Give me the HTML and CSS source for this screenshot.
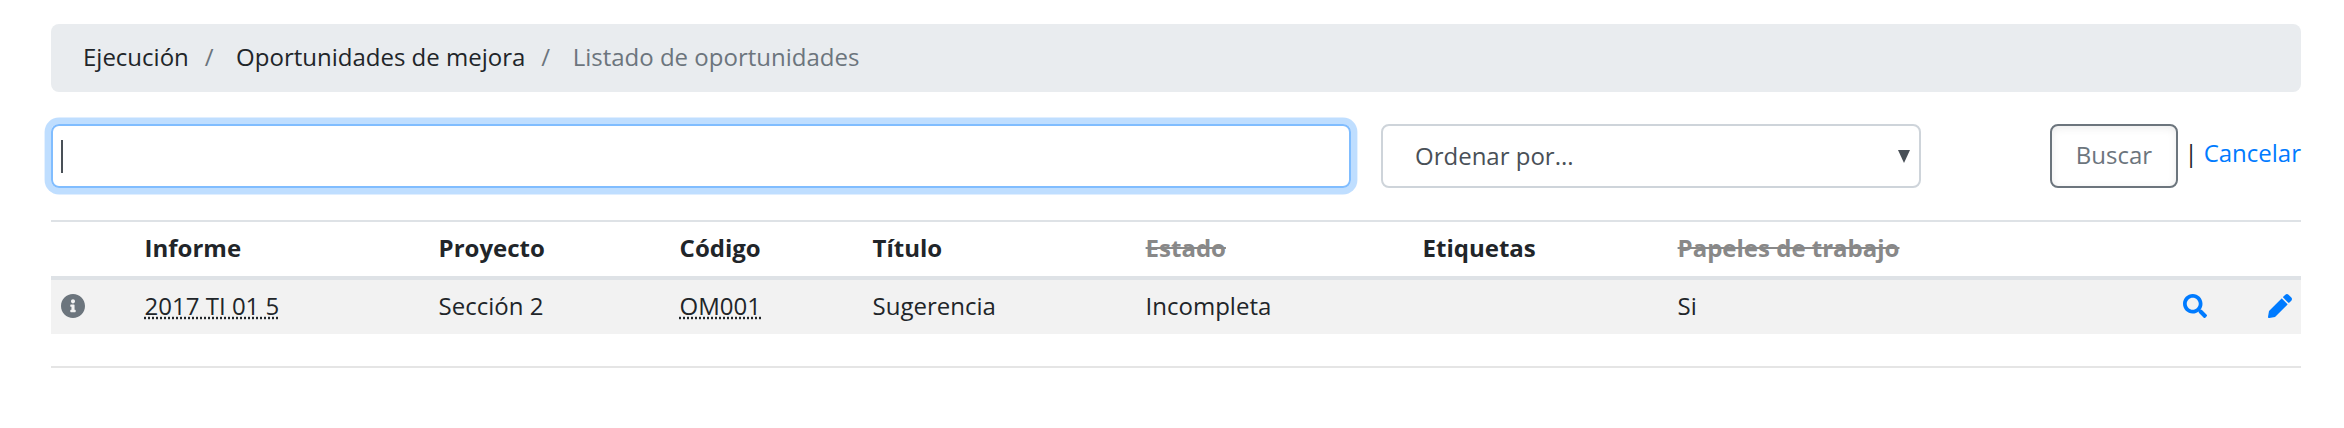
FILE: index.html
```
<!DOCTYPE html>
<html lang="es">
<head>
<meta charset="utf-8">
<title>Listado de oportunidades</title>
<link rel="stylesheet" href="styles.css">
</head>
<body>
<nav class="breadcrumb">
  <a class="crumb">Ejecución</a><span class="sep">/</span><a class="crumb">Oportunidades de mejora</a><span class="sep">/</span><span class="current">Listado de oportunidades</span>
</nav>
<form class="search">
  <div class="query"><span class="caret"></span></div>
  <div class="order"><span>Ordenar por...</span><svg class="arrow" viewBox="0 0 12 13"><path d="M0 0h12L6 13z"/></svg></div>
  <div class="actions"><button class="submit" type="button">Buscar</button><span class="bar">|</span><a class="cancel">Cancelar</a></div>
</form>
<table class="list">
  <colgroup><col class="c-info"><col class="c-report"><col class="c-project"><col class="c-code"><col class="c-title"><col class="c-state"><col class="c-tags"><col class="c-papers"><col class="c-view"><col class="c-edit"></colgroup>
  <thead>
    <tr><th></th><th>Informe</th><th>Proyecto</th><th>Código</th><th>Título</th><th><del>Estado</del></th><th>Etiquetas</th><th><del>Papeles de trabajo</del></th><th></th><th></th></tr>
  </thead>
  <tbody>
    <tr>
      <td><svg class="icon info" viewBox="8 8 496 496"><path d="M256 8C119.043 8 8 119.083 8 256c0 136.997 111.043 248 248 248s248-111.003 248-248C504 119.083 392.957 8 256 8zm0 110c23.196 0 42 18.804 42 42s-18.804 42-42 42-42-18.804-42-42 18.804-42 42-42zm56 254c0 6.627-5.373 12-12 12h-88c-6.627 0-12-5.373-12-12v-24c0-6.627 5.373-12 12-12h12v-64h-12c-6.627 0-12-5.373-12-12v-24c0-6.627 5.373-12 12-12h64c6.627 0 12 5.373 12 12v100h12c6.627 0 12 5.373 12 12v24z"/></svg></td>
      <td><abbr>2017 TI 01 5</abbr></td><td>Sección 2</td><td><abbr>OM001</abbr></td><td>Sugerencia</td><td>Incompleta</td><td></td><td>Si</td>
      <td><svg class="icon link" viewBox="0 0 512 512"><path d="M505 442.700L405.300 343c-4.500-4.500-10.600-7-17-7H372c27.600-35.300 44-79.700 44-128C416 93.100 322.900 0 208 0S0 93.100 0 208s93.100 208 208 208c48.300 0 92.700-16.400 128-44v16.300c0 6.400 2.500 12.500 7 17l99.700 99.700c9.400 9.400 24.600 9.400 33.900 0l28.300-28.300c9.400-9.400 9.400-24.600.1-34zM208 336c-70.700 0-128-57.200-128-128 0-70.700 57.200-128 128-128 70.700 0 128 57.200 128 128 0 70.700-57.200 128-128 128z"/></svg></td>
      <td><svg class="icon link" viewBox="0 0 512 512"><path d="M497.900 142.100l-46.100 46.100c-4.700 4.700-12.300 4.700-17 0l-111-111c-4.700-4.700-4.700-12.300 0-17l46.100-46.100c18.700-18.700 49.100-18.700 67.900 0l60.100 60.100c18.800 18.700 18.800 49.100 0 67.900zM284.200 99.800L21.600 362.400.4 483.900c-2.900 16.400 11.400 30.600 27.800 27.800l121.500-21.300 262.600-262.600c4.700-4.700 4.700-12.300 0-17l-111-111c-4.800-4.700-12.400-4.700-17.100 0z"/></svg></td>
    </tr>
  </tbody>
</table>
<hr class="rule">
</body>
</html>
```
FILE: styles.css
```
* { box-sizing: border-box; }
body {
  margin: 0;
  padding: 24px 43px 0 51px;
  background: #fff;
  color: #212529;
  font: 24px/36px "Open Sans", "Noto Sans", sans-serif;
}
.breadcrumb {
  display: flex;
  height: 68px;
  padding: 15px 32px;
  border-radius: 8px;
  background: #e9ecef;
}
.sep { padding: 0 22.500px 0 16px; color: #6c757d; }
.current { color: #6c757d; }
.search { display: flex; margin: 32px 0; height: 64px; }
.query {
  width: 1300px;
  margin-right: 30px;
  padding: 14px 8px;
  border: 2px solid #80bdff;
  border-radius: 8px;
  box-shadow: 0 0 0 6.400px rgba(0, 123, 255, .25);
}
.caret { display: block; width: 2px; height: 33px; background: #495057; }
.order {
  display: flex;
  justify-content: space-between;
  width: 540px;
  padding: 12px 9px 12px 32px;
  border: 2px solid #ced4da;
  border-radius: 8px;
  color: #495057;
}
.arrow { width: 12px; height: 13px; margin-top: 12px; fill: #495057; }
.actions { display: flex; margin-left: auto; }
.submit {
  width: 128px;
  height: 64px;
  padding: 0 1px 2px 0;
  border: 2px solid #6c757d;
  border-radius: 8px;
  background: #fff;
  box-shadow: inset 0 2px 8px rgba(0, 0, 0, .08);
  color: #6c757d;
  font: inherit;
}
.bar { padding: 11px 6px 0 6px; }
.cancel { padding-top: 11px; color: #007bff; }
.list {
  width: 2250px;
  table-layout: fixed;
  border-collapse: separate;
  border-spacing: 0;
}
.list th {
  height: 60px;
  padding: 8px 9.600px 10px;
  border-top: 2px solid #dee2e6;
  border-bottom: 4px solid #dee2e6;
  text-align: left;
}
.list td { height: 54px; padding: 8px 9.600px 10px; background: #f2f2f2; }
.list del { color: #888; }
.list td:nth-last-child(-n+2) { padding-right: 9px; text-align: right; }
.list abbr { text-decoration: underline dotted; }
.c-info { width: 84px; }
.c-report { width: 294px; }
.c-project { width: 241px; }
.c-code { width: 193px; }
.c-title { width: 273px; }
.c-state { width: 277px; }
.c-tags { width: 255px; }
.c-papers { width: 463px; }
.c-view { width: 85px; }
.c-edit { width: 85px; }
.icon { display: inline-block; width: 24px; height: 24px; vertical-align: -3px; }
.info { fill: #6c757d; }
.link { fill: #007bff; }
.rule { margin: 32px 0 0; width: 2250px; border: 0; border-top: 2px solid #e5e5e5; }
```
